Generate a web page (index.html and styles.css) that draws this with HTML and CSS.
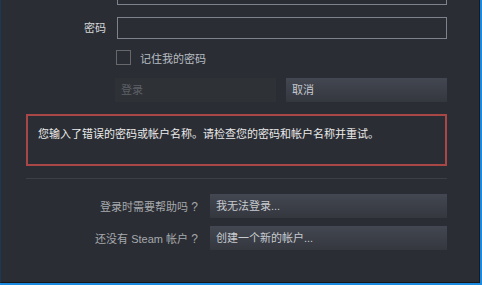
FILE: index.html
```html
<!DOCTYPE html>
<html lang="zh-CN">
<head>
<meta charset="utf-8">
<link rel="stylesheet" href="styles.css">
</head>
<body>
<div class="window">
  <div class="content">
    <div class="field first">
      <span class="label"></span>
      <div class="input"></div>
    </div>
    <div class="field gap-input">
      <span class="label">密码</span>
      <div class="input"></div>
    </div>
    <div class="remember">
      <span class="checkbox"></span>
      <span class="remember-text">记住我的密码</span>
    </div>
    <div class="actions">
      <div class="btn btn-disabled">登录</div>
      <div class="btn btn-normal">取消</div>
    </div>
    <div class="error">您输入了错误的密码或帐户名称。请检查您的密码和帐户名称并重试。</div>
    <div class="separator"></div>
    <div class="help first-help">
      <span class="help-label">登录时需要帮助吗<span class="fw">?</span></span>
      <div class="btn btn-normal help-btn">我无法登录...</div>
    </div>
    <div class="help second-help">
      <span class="help-label">还没有 Steam 帐户<span class="fw">?</span></span>
      <div class="btn btn-normal help-btn">创建一个新的帐户...</div>
    </div>
  </div>
</div>
</body>
</html>
```

FILE: styles.css
```css
html, body {
  margin: 0;
  padding: 0;
}
body {
  width: 482px;
  height: 285px;
  background: #1a8ae0;
  overflow: hidden;
  font-family: "Liberation Sans", "Noto Sans CJK SC", sans-serif;
  font-size: 11px;
}
.window {
  width: 478px;
  height: 282px;
  background: #2a2d33;
  border-left: 1px solid #1b3954;
  border-right: 1px solid #17191d;
  border-bottom: 1px solid #17191d;
  overflow: hidden;
}
.content {
  padding-left: 25px;
  width: 421px;
  display: flex;
  flex-direction: column;
}
.field {
  display: flex;
  align-items: center;
  height: 22px;
}
.field.first {
  margin-top: -17px;
}
.field.gap-input {
  margin-top: 12px;
}
.label {
  width: 80px;
  margin-right: 11px;
  text-align: right;
  color: #d4d7da;
  line-height: 22px;
}
.input {
  box-sizing: border-box;
  width: 330px;
  height: 22px;
  border: 1px solid #7d828c;
  background: #2a2d33;
}
.remember {
  display: flex;
  align-items: center;
  margin-top: 11px;
  margin-left: 90px;
  height: 15px;
}
.checkbox {
  box-sizing: border-box;
  width: 15px;
  height: 15px;
  border: 1px solid #66686c;
}
.remember-text {
  margin-left: 9px;
  color: #b7bdc3;
}
.actions {
  display: flex;
  margin-top: 13px;
  margin-left: 89px;
  gap: 10px;
}
.btn {
  box-sizing: border-box;
  height: 24px;
  line-height: 24px;
  padding-left: 6px;
}
.actions .btn {
  width: 161px;
}
.btn-disabled {
  background: #2e3136;
  color: #5d6066;
}
.btn-normal {
  background: linear-gradient(to bottom, #434751, #34373e);
  color: #c7cbd0;
}
.error {
  box-sizing: border-box;
  margin-top: 12px;
  width: 421px;
  height: 52px;
  border: 2px solid #a94646;
  padding: 9px 0 0 10px;
  line-height: 18px;
  color: #ebebeb;
}
.separator {
  margin-top: 12px;
  width: 421px;
  height: 1px;
  background: #3c3f45;
}
.help {
  display: flex;
  align-items: center;
}
.first-help {
  margin-top: 15px;
}
.second-help {
  margin-top: 8px;
}
.help-label {
  width: 172px;
  margin-right: 12px;
  text-align: right;
  color: #a6a9ad;
}
.fw {
  display: inline-block;
  width: 10px;
  text-align: right;
  font-size: 12px;
}
.help-btn {
  width: 237px;
}
```
